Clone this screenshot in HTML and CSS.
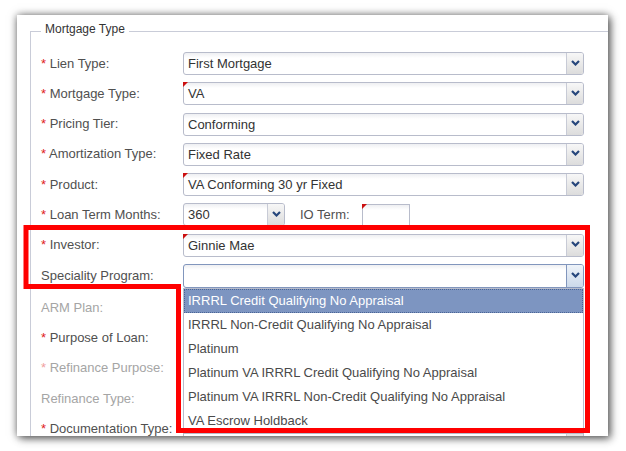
FILE: index.html
```html
<!DOCTYPE html>
<html>
<head>
<meta charset="utf-8">
<link rel="stylesheet" href="styles.css">
</head>
<body>
<div class="card">
  <fieldset class="group">
    <legend>Mortgage Type</legend>
    <div class="form">
      <div class="lbl"><span class="req">*</span> Lien Type:</div>
      <div class="ctl"><div class="sel"><span class="val">First Mortgage</span><span class="btn"><svg width="9" height="6" viewBox="0 0 9 6"><path d="M1 1 L4.5 4.5 L8 1" fill="none" stroke="#26467c" stroke-width="2.2"/></svg></span></div></div>

      <div class="lbl"><span class="req">*</span> Mortgage Type:</div>
      <div class="ctl"><div class="sel dirty"><span class="val">VA</span><span class="btn"><svg width="9" height="6" viewBox="0 0 9 6"><path d="M1 1 L4.5 4.5 L8 1" fill="none" stroke="#26467c" stroke-width="2.2"/></svg></span></div></div>

      <div class="lbl"><span class="req">*</span> Pricing Tier:</div>
      <div class="ctl"><div class="sel"><span class="val">Conforming</span><span class="btn"><svg width="9" height="6" viewBox="0 0 9 6"><path d="M1 1 L4.5 4.5 L8 1" fill="none" stroke="#26467c" stroke-width="2.2"/></svg></span></div></div>

      <div class="lbl"><span class="req">*</span> Amortization Type:</div>
      <div class="ctl"><div class="sel"><span class="val">Fixed Rate</span><span class="btn"><svg width="9" height="6" viewBox="0 0 9 6"><path d="M1 1 L4.5 4.5 L8 1" fill="none" stroke="#26467c" stroke-width="2.2"/></svg></span></div></div>

      <div class="lbl"><span class="req">*</span> Product:</div>
      <div class="ctl"><div class="sel dirty"><span class="val">VA Conforming 30 yr Fixed</span><span class="btn"><svg width="9" height="6" viewBox="0 0 9 6"><path d="M1 1 L4.5 4.5 L8 1" fill="none" stroke="#26467c" stroke-width="2.2"/></svg></span></div></div>

      <div class="lbl"><span class="req">*</span> Loan Term Months:</div>
      <div class="ctl inline">
        <div class="sel short"><span class="val">360</span><span class="btn"><svg width="9" height="6" viewBox="0 0 9 6"><path d="M1 1 L4.5 4.5 L8 1" fill="none" stroke="#26467c" stroke-width="2.2"/></svg></span></div>
        <span class="sublbl">IO Term:</span>
        <div class="txt dirty"></div>
      </div>

      <div class="lbl"><span class="req">*</span> Investor:</div>
      <div class="ctl"><div class="sel dirty"><span class="val">Ginnie Mae</span><span class="btn"><svg width="9" height="6" viewBox="0 0 9 6"><path d="M1 1 L4.5 4.5 L8 1" fill="none" stroke="#26467c" stroke-width="2.2"/></svg></span></div></div>

      <div class="lbl spec">Speciality Program:</div>
      <div class="ctl popwrap">
        <div class="sel focus"><span class="val"></span><span class="btn"><svg width="9" height="6" viewBox="0 0 9 6"><path d="M1 1 L4.5 4.5 L8 1" fill="none" stroke="#26467c" stroke-width="2.2"/></svg></span></div>
        <ul class="pop">
          <li class="hi">IRRRL Credit Qualifying No Appraisal</li>
          <li>IRRRL Non-Credit Qualifying No Appraisal</li>
          <li>Platinum</li>
          <li>Platinum VA IRRRL Credit Qualifying No Appraisal</li>
          <li>Platinum VA IRRRL Non-Credit Qualifying No Appraisal</li>
          <li>VA Escrow Holdback</li>
        </ul>
      </div>

      <div class="lbl off">ARM Plan:</div>
      <div class="ctl"><div class="sel"><span class="val"></span><span class="btn"></span></div></div>

      <div class="lbl"><span class="req">*</span> Purpose of Loan:</div>
      <div class="ctl"><div class="sel"><span class="val"></span><span class="btn"></span></div></div>

      <div class="lbl off"><span class="req off">*</span> Refinance Purpose:</div>
      <div class="ctl"><div class="sel"><span class="val"></span><span class="btn"></span></div></div>

      <div class="lbl off">Refinance Type:</div>
      <div class="ctl"><div class="sel"><span class="val"></span><span class="btn"></span></div></div>

      <div class="lbl"><span class="req">*</span> Documentation Type:</div>
      <div class="ctl"><div class="sel"><span class="val"></span><span class="btn"></span></div></div>
    </div>
  </fieldset>
</div>
<svg class="mark" width="626" height="451" viewBox="0 0 626 451">
  <path d="M26 227.5 H587.5 V430.5 H178.5 V286.5 H26 Z" fill="none" stroke="#ff0000" stroke-width="5" stroke-linejoin="miter"/>
</svg>
</body>
</html>
```
FILE: styles.css
```css
html, body {
  margin: 0;
  padding: 0;
  background: #ffffff;
}
body {
  width: 626px;
  height: 451px;
  overflow: hidden;
  font-family: "Liberation Sans", Arial, sans-serif;
  position: relative;
}
.card {
  margin: 15px 0 0 17px;
  width: 591px;
  height: 421px;
  background: #ffffff;
  overflow: hidden;
  box-sizing: border-box;
  padding: 7px 0 0 13px;
  box-shadow: 0 0 8px rgba(0, 0, 0, 0.5), 3px 3px 8px rgba(0, 0, 0, 0.45);
}
.group {
  margin: 0;
  padding: 12px 0 0 10px;
  border: 1px solid #c9ccd8;
  width: 700px;
  min-height: 480px;
  box-sizing: border-box;
}
.group legend {
  font-size: 12px;
  line-height: 14px;
  color: #333333;
  padding: 0 4px 4px 4px;
  margin-left: 0;
}
.form {
  display: grid;
  grid-template-columns: 142px 401px;
  row-gap: 7.3px;
  align-items: center;
}
.lbl {
  font-size: 13px;
  color: #505050;
  white-space: nowrap;
  line-height: 16px;
}
.lbl.spec {
  align-self: start;
  margin-top: 4px;
}
.lbl.off {
  color: #a5a5a5;
}
.req {
  color: #e02020;
}
.req.off {
  color: #f0a0a0;
}
.ctl {
  position: relative;
  height: 23px;
}
.ctl.popwrap {
  height: 25px;
}
.ctl.inline {
  display: flex;
  align-items: center;
}
.sel {
  position: relative;
  display: flex;
  height: 23px;
  box-sizing: border-box;
  border: 1px solid #b8bccb;
  border-radius: 3px;
  background: linear-gradient(#eeeff2, #ffffff 5px);
}
.sel.short {
  width: 102px;
}
.sel.focus {
  border-color: #8196bd;
  height: 24px;
}
.val {
  flex: 1;
  padding-left: 4px;
  font-size: 13px;
  line-height: 21px;
  color: #333333;
  white-space: nowrap;
  overflow: hidden;
}
.btn {
  width: 17px;
  border-left: 1px solid #c8cbd6;
  border-radius: 0 2px 2px 0;
  background: linear-gradient(#f7f7f7, #dcdcdc);
  display: flex;
  align-items: center;
  justify-content: center;
  padding-bottom: 2px;
  box-sizing: border-box;
}
.sel.focus .btn {
  border-left-color: #8196bd;
  background: linear-gradient(#eef3f9, #ccd9ea);
}
.dirty::before {
  content: "";
  position: absolute;
  top: -1px;
  left: -1px;
  border-top: 5px solid #cc1010;
  border-right: 5px solid transparent;
}
.sublbl {
  font-size: 13px;
  color: #505050;
  margin-left: 15px;
  white-space: nowrap;
}
.txt {
  position: relative;
  width: 48px;
  height: 22px;
  box-sizing: border-box;
  margin-left: 12px;
  border: 1px solid #b8bccb;
  background: linear-gradient(#eeeff2, #ffffff 5px);
}
.pop {
  position: absolute;
  top: 24px;
  left: 0;
  width: 401px;
  margin: 0;
  padding: 0;
  list-style: none;
  background: #ffffff;
  border: 1px solid #b8bccb;
  box-sizing: border-box;
  z-index: 5;
}
.pop li {
  height: 24px;
  line-height: 24px;
  padding-left: 4px;
  font-size: 13px;
  color: #4a4a4a;
  white-space: nowrap;
  box-sizing: border-box;
}
.pop li.hi {
  background: #7d95c1;
  color: #ffffff;
  border: 1px dotted #4a6596;
  line-height: 22px;
  padding-left: 3px;
}
.mark {
  position: absolute;
  left: 0;
  top: 0;
  pointer-events: none;
  z-index: 10;
}
```
